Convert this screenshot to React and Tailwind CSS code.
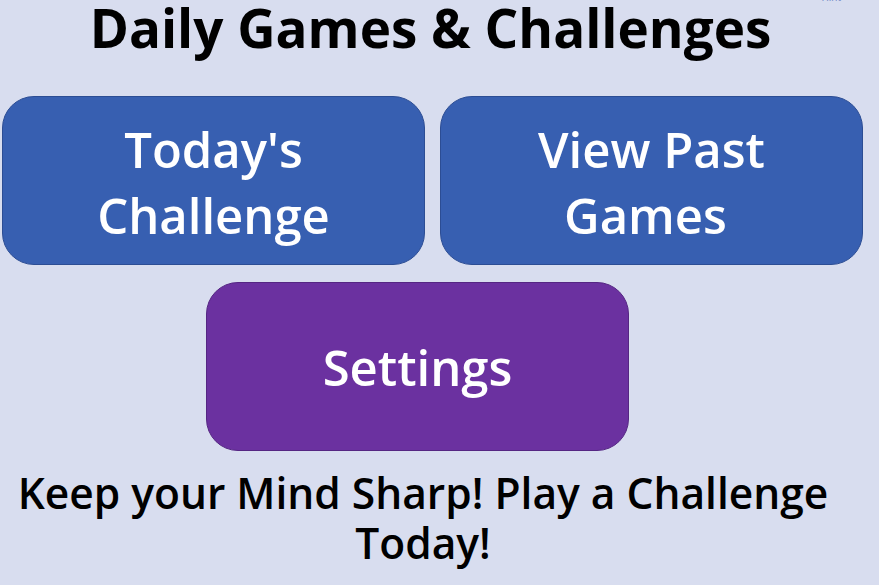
export default function App() {
  return (
    <div
      className="relative w-[879px] h-[585px] overflow-hidden bg-[#d8ddef] text-black"
      style={{ fontFamily: '"Open Sans", sans-serif' }}
    >
      <span className="absolute right-[38px] -top-[9px] text-[10px] leading-[12px] text-[#6d86c4]">
        Hint
      </span>
      <h1 className="text-center font-bold text-[53px] leading-[60px] -mt-[2px] pr-[18px]">
        Daily Games &amp; Challenges
      </h1>
      <div className="grid grid-cols-2 gap-[15px] px-[2px] pr-[16px] mt-[38px]">
        <button className="h-[169px] rounded-[32px] bg-[#375fb1] border border-[#2c4d94] text-white font-semibold text-[49px] leading-[66px] pt-[2px]">
          Today's
          <br />
          Challenge
        </button>
        <button className="h-[169px] rounded-[32px] bg-[#375fb1] border border-[#2c4d94] text-white font-semibold text-[49px] leading-[66px] pt-[2px]">
          View Past
          <span className="block pr-[12px]">Games</span>
        </button>
      </div>
      <div className="flex justify-center pr-[44px] mt-[17px]">
        <button className="w-[423px] h-[169px] rounded-[32px] bg-[#6b31a0] border border-[#552683] text-white font-semibold text-[49px] leading-[66px]">
          Settings
        </button>
      </div>
      <p className="text-center font-semibold text-[42.5px] leading-[50px] mt-[17px] pr-[33px]">
        Keep your Mind Sharp! Play a Challenge
        <br />
        Today!
      </p>
    </div>
  );
}
